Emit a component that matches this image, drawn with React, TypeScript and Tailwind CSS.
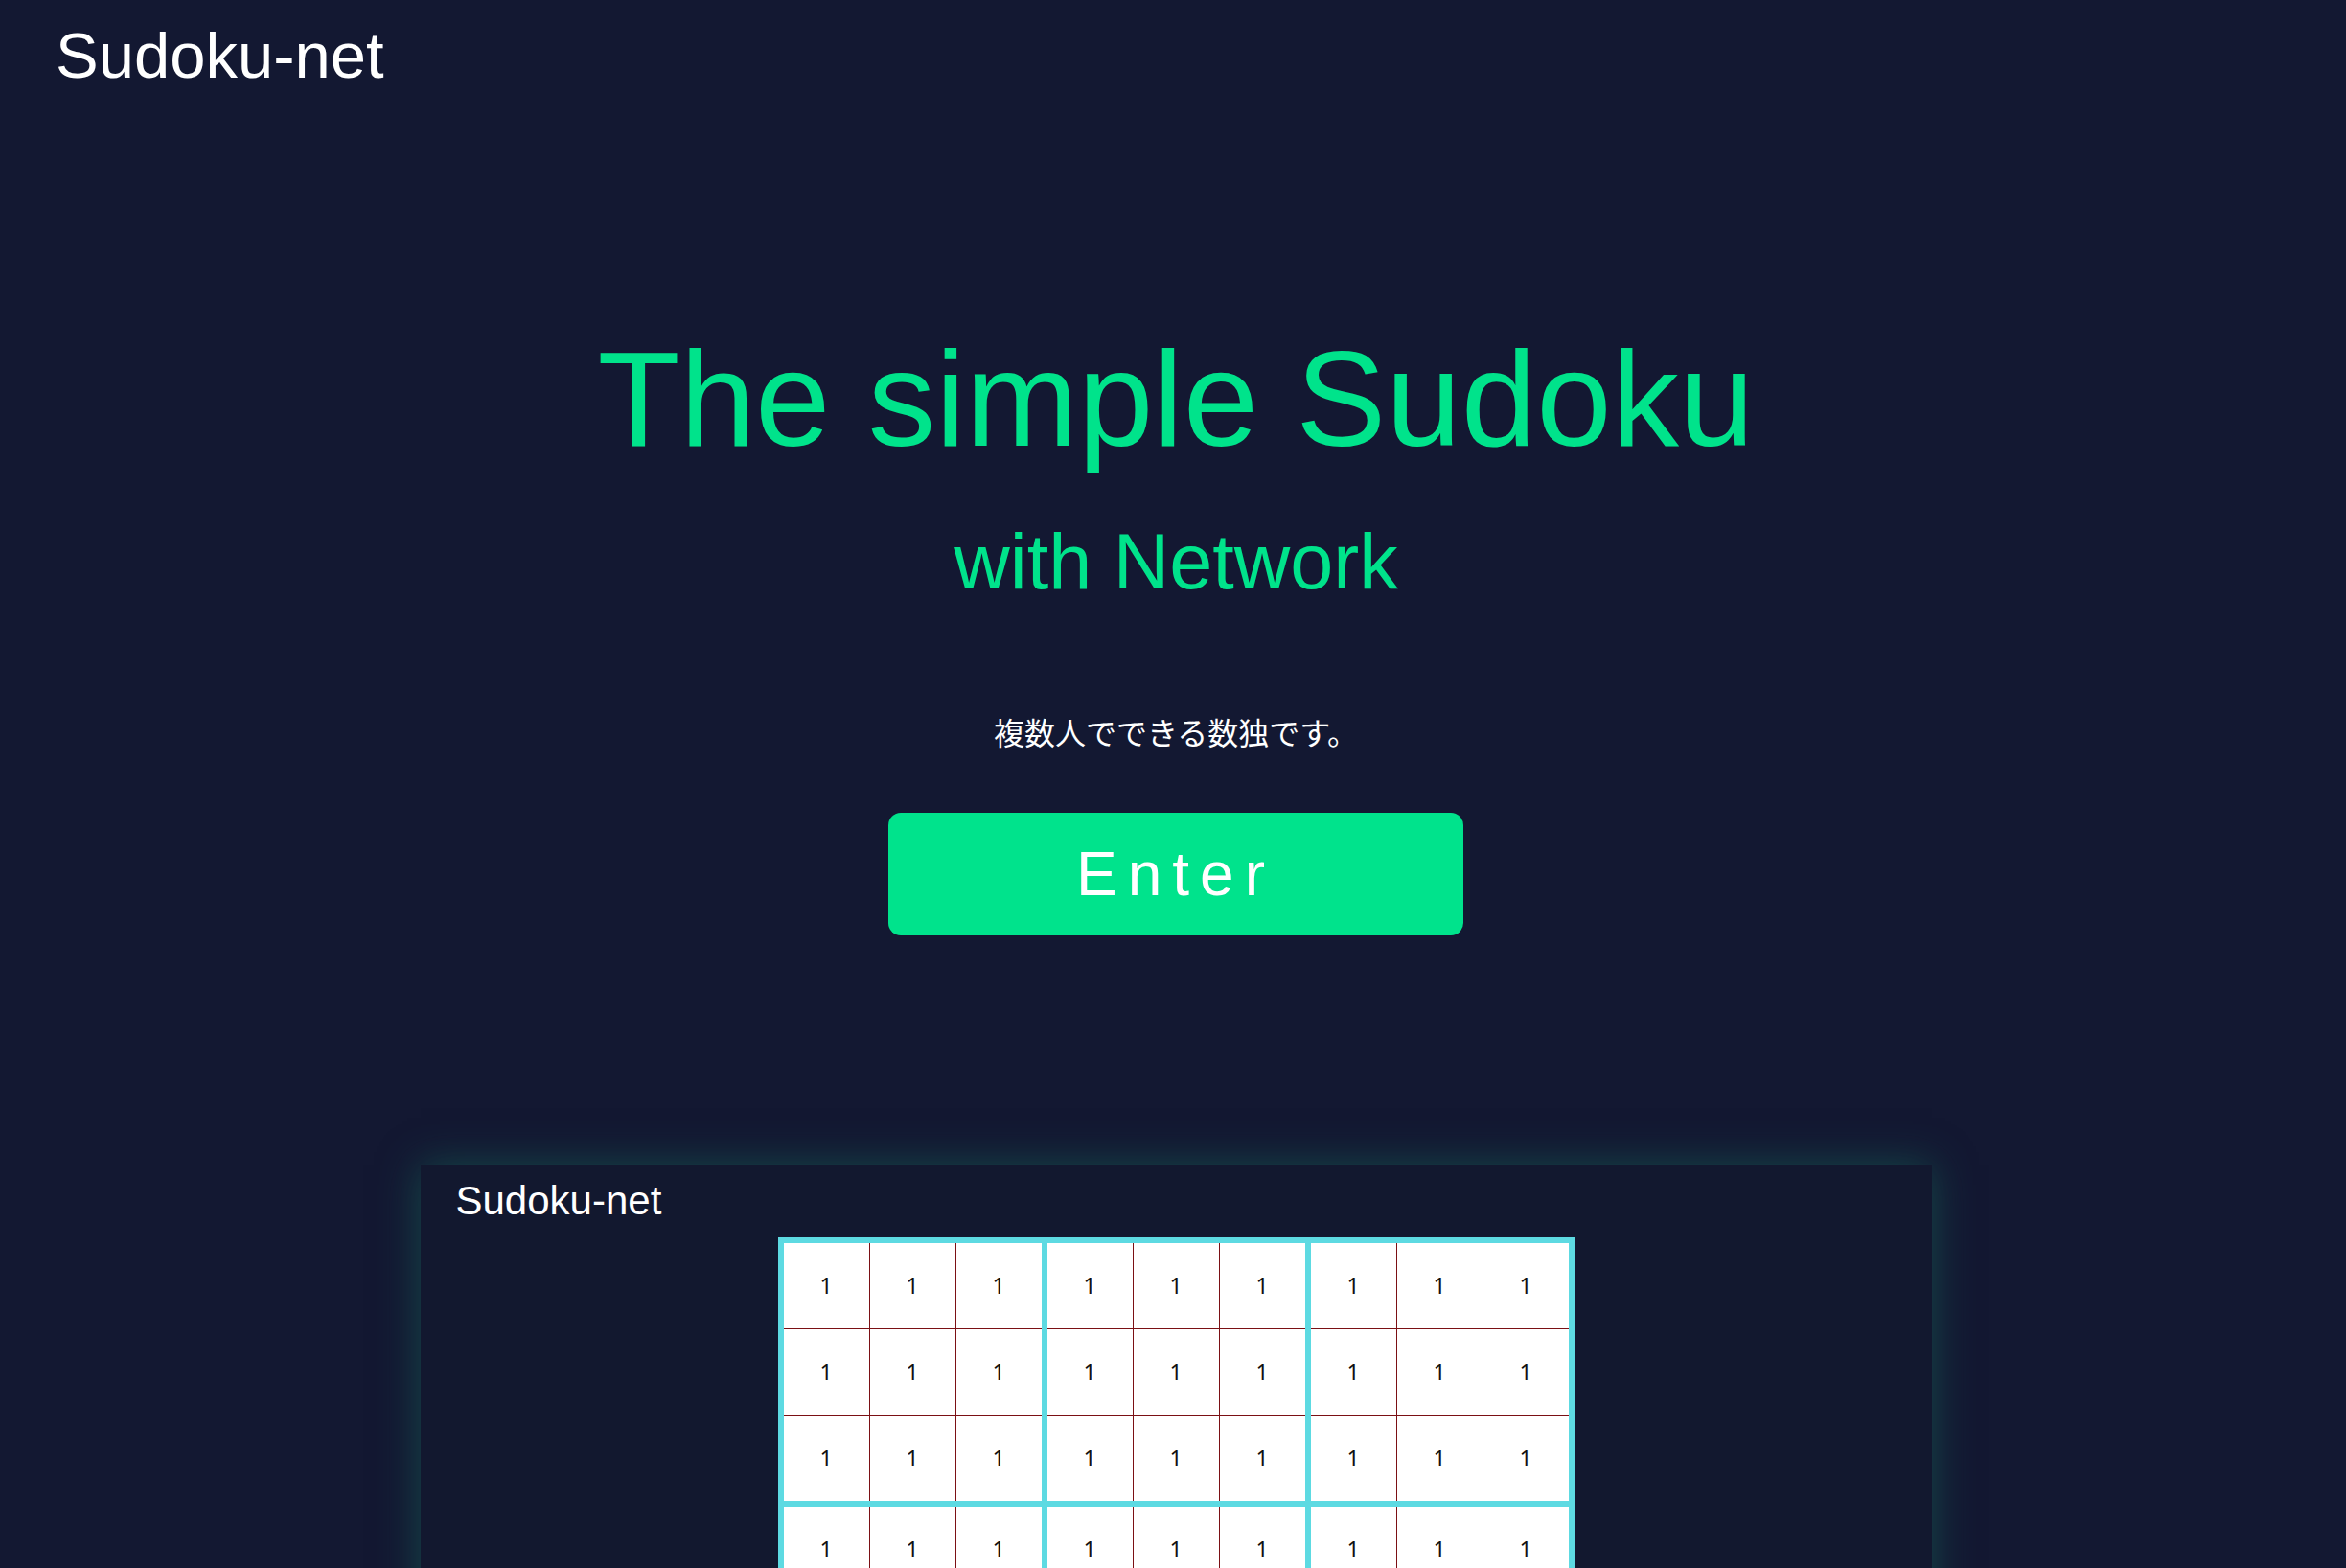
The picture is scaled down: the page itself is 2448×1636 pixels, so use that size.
import React from 'react';

const sans = "font-['Liberation_Sans','Noto_Sans_CJK_JP',sans-serif]";

function Block() {
    return (
        <div className="grid grid-cols-3 gap-px bg-[#7b1014]">
            {Array.from({ length: 9 }).map((_, i) => (
                <div key={i} className="flex h-[89px] w-[89px] items-center justify-center bg-white font-['Noto_Sans',sans-serif] text-[23px] leading-none text-[#111]">
                    1
                </div>
            ))}
        </div>
    );
}

function Board() {
    return (
        <div className="mx-auto grid w-fit grid-cols-3 gap-[6px] border-[6px] border-[#5ddae2] bg-[#5ddae2]">
            {Array.from({ length: 9 }).map((_, i) => (
                <Block key={i} />
            ))}
        </div>
    );
}

export default function App() {
    return (
        <div className={`min-h-screen bg-[#131832] ${sans}`}>
            {/* Header */}
            <header className="pl-[58px] pt-6">
                <div className="text-[67px] leading-none text-white">Sudoku-net</div>
            </header>

            <main className="pl-[6px]">
                {/* Hero */}
                <section className="flex flex-col items-center">
                    <h1 className="mt-[255px] text-[141px] font-normal leading-none text-[#00e38b]">The simple Sudoku</h1>
                    <h2 className="mt-[59px] text-[81px] font-normal leading-none text-[#00e38b]">with Network</h2>
                    <p className="mt-[120px] font-['Noto_Sans_CJK_JP',sans-serif] text-[32px] leading-none text-white">
                        複数人でできる数独です。
                    </p>
                    <button className="mt-[69px] flex h-[128px] w-[600px] items-center justify-center rounded-[13px] bg-[#00e38c] text-[64px] leading-none tracking-[11px] text-white">
                        Enter
                    </button>
                </section>

                {/* Preview card */}
                <section className="mx-auto mt-[240px] w-[1577px] bg-[#12182f] px-[35px] pb-10 pt-[16px] shadow-[0_0_40px_rgba(22,90,82,0.75)]">
                    <div className="pl-[2px] text-[42px] leading-none text-white">Sudoku-net</div>
                    <div className="mt-[17px]">
                        <Board />
                    </div>
                </section>
            </main>
        </div>
    );
}
